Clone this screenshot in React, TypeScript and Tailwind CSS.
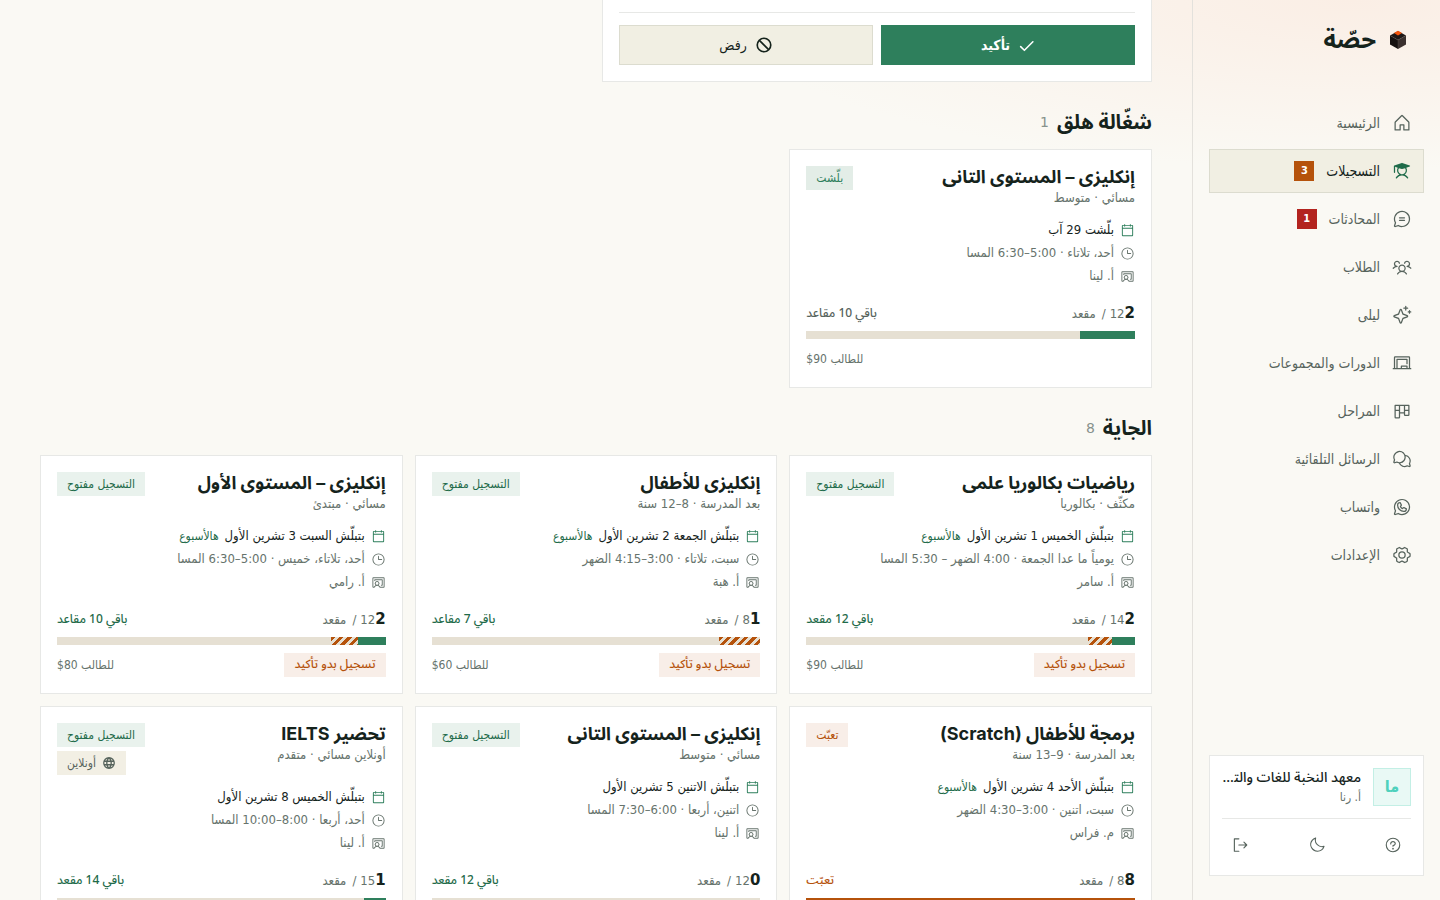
import type { ReactNode } from 'react'
import type { IconType } from 'react-icons'
import {
	PiCalendarBlank,
	PiChalkboard,
	PiChalkboardTeacher,
	PiChatCircleText,
	PiChatsCircle,
	PiCheckBold,
	PiClock,
	PiGearSix,
	PiGlobeBold,
	PiHouse,
	PiKanban,
	PiMoon,
	PiProhibitBold,
	PiQuestion,
	PiSignOut,
	PiSparkle,
	PiStudentFill,
	PiUsersThree,
	PiWhatsappLogo,
} from 'react-icons/pi'
import clsx from 'clsx'

interface NavItem {
	label: string
	icon: IconType
	active?: boolean
	count?: number
	countClass?: string
}

interface Course {
	title: string
	subtitle: string
	status: string
	tone: 'open' | 'running' | 'full'
	online?: boolean
	start: string
	thisWeek?: boolean
	schedule: string
	teacher: string
	taken: number
	pending: number
	seats: number
	left: string
	price: string
}

const NAV: NavItem[] = [
	{ label: 'الرئيسية', icon: PiHouse },
	{ label: 'التسجيلات', icon: PiStudentFill, active: true, count: 3, countClass: 'bg-[#b5520b]' },
	{ label: 'المحادثات', icon: PiChatCircleText, count: 1, countClass: 'bg-[#b3241f]' },
	{ label: 'الطلاب', icon: PiUsersThree },
	{ label: 'ليلى', icon: PiSparkle },
	{ label: 'الدورات والمجموعات', icon: PiChalkboard },
	{ label: 'المراحل', icon: PiKanban },
	{ label: 'الرسائل التلقائية', icon: PiChatsCircle },
	{ label: 'واتساب', icon: PiWhatsappLogo },
	{ label: 'الإعدادات', icon: PiGearSix },
]

const RUNNING: Course[] = [
	{
		title: 'إنكليزى – المستوى التانى',
		subtitle: 'مسائي · متوسط',
		status: 'بلّشت',
		tone: 'running',
		start: 'بلّشت 29 آب',
		schedule: 'أحد، تلاتاء · 5:00–6:30 المسا',
		teacher: 'أ. لينا',
		taken: 2,
		pending: 0,
		seats: 12,
		left: 'باقي 10 مقاعد',
		price: '$90',
	},
]

const UPCOMING: Course[] = [
	{
		title: 'رياضيات بكالوريا علمى',
		subtitle: 'مكثّف · بكالوريا',
		status: 'التسجيل مفتوح',
		tone: 'open',
		start: 'بتبلّش الخميس 1 تشرين الأول',
		thisWeek: true,
		schedule: 'يومياً ما عدا الجمعة · 4:00 الضهر – 5:30 المسا',
		teacher: 'أ. سامر',
		taken: 2,
		pending: 1,
		seats: 14,
		left: 'باقي 12 مقعد',
		price: '$90',
	},
	{
		title: 'إنكليزى للأطفال',
		subtitle: 'بعد المدرسة · 8–12 سنة',
		status: 'التسجيل مفتوح',
		tone: 'open',
		start: 'بتبلّش الجمعة 2 تشرين الأول',
		thisWeek: true,
		schedule: 'سبت، تلاتاء · 3:00–4:15 الضهر',
		teacher: 'أ. هبة',
		taken: 1,
		pending: 1,
		seats: 8,
		left: 'باقي 7 مقاعد',
		price: '$60',
	},
	{
		title: 'إنكليزى – المستوى الأول',
		subtitle: 'مسائي · مبتدئ',
		status: 'التسجيل مفتوح',
		tone: 'open',
		start: 'بتبلّش السبت 3 تشرين الأول',
		thisWeek: true,
		schedule: 'أحد، تلاتاء، خميس · 5:00–6:30 المسا',
		teacher: 'أ. رامي',
		taken: 2,
		pending: 1,
		seats: 12,
		left: 'باقي 10 مقاعد',
		price: '$80',
	},
	{
		title: 'برمجة للأطفال (Scratch)',
		subtitle: 'بعد المدرسة · 9–13 سنة',
		status: 'تعبّت',
		tone: 'full',
		start: 'بتبلّش الأحد 4 تشرين الأول',
		thisWeek: true,
		schedule: 'سبت، اتنين · 3:00–4:30 الضهر',
		teacher: 'م. فراس',
		taken: 8,
		pending: 0,
		seats: 8,
		left: 'تعبّت',
		price: '',
	},
	{
		title: 'إنكليزى – المستوى التانى',
		subtitle: 'مسائي · متوسط',
		status: 'التسجيل مفتوح',
		tone: 'open',
		start: 'بتبلّش الاتنين 5 تشرين الأول',
		schedule: 'اتنين، أربعا · 6:00–7:30 المسا',
		teacher: 'أ. لينا',
		taken: 0,
		pending: 0,
		seats: 12,
		left: 'باقي 12 مقعد',
		price: '',
	},
	{
		title: 'تحضير IELTS',
		subtitle: 'أونلاين مسائي · متقدم',
		status: 'التسجيل مفتوح',
		tone: 'open',
		online: true,
		start: 'بتبلّش الخميس 8 تشرين الأول',
		schedule: 'أحد، أربعا · 8:00–10:00 المسا',
		teacher: 'أ. لينا',
		taken: 1,
		pending: 0,
		seats: 15,
		left: 'باقي 14 مقعد',
		price: '',
	},
]

const BADGE_TONE = {
	open: 'bg-[#e9f2ed] text-[#1f6b4a]',
	running: 'bg-[#e3ede7] text-[#2e7f5c]',
	full: 'bg-[#f8eee8] text-[#b5520b]',
	neutral: 'bg-[#f2efe4] text-[#56635c]',
}

const LEFT_TONE = {
	open: 'text-[#1f6b4a]',
	running: 'text-[#56635c]',
	full: 'text-[#b5520b]',
}

function Badge({ tone, className, children }: { tone: keyof typeof BADGE_TONE; className?: string; children: ReactNode }) {
	return (
		<span className={clsx('flex h-6 items-center gap-1.5 px-2.5 text-xs font-medium whitespace-nowrap', BADGE_TONE[tone], className)}>
			{children}
		</span>
	)
}

function SeatBar({ course }: { course: Course }) {
	const confirmed = course.taken - course.pending
	return (
		<div className="mt-[5px] flex h-2 bg-[#e6e0d3]">
			<div
				className={course.tone === 'full' ? 'bg-[#b5520b]' : 'bg-[#2e7f5c]'}
				style={{ width: `${(confirmed / course.seats) * 100}%` }}
			/>
			<div
				className="bg-[repeating-linear-gradient(135deg,#b5520b_0px,#b5520b_3px,transparent_3px,transparent_6px)]"
				style={{ width: `${(course.pending / course.seats) * 100}%` }}
			/>
		</div>
	)
}

function CourseCard({ course }: { course: Course }) {
	return (
		<article className="flex flex-col border border-[#e7e8e6] bg-white p-4">
			<div className="flex items-start justify-between gap-3">
				<div className="min-w-0">
					<h3 className="font-['Inter','Noto_Sans_Arabic','DejaVu_Sans',sans-serif] text-lg leading-[22px] font-bold text-[#15231c]">
						{course.title}
					</h3>
					<p className="text-[13px] leading-5 text-[#66736c]">{course.subtitle}</p>
				</div>
				<div className="flex flex-col items-end gap-1">
					<Badge tone={course.tone}>{course.status}</Badge>
					{course.online && (
						<Badge tone="neutral">
							<PiGlobeBold size={14} />
							أونلاين
						</Badge>
					)}
				</div>
			</div>

			<ul className="mt-3 flex flex-col gap-[3px] text-[13px] leading-5 text-[#66736c]">
				<li className="flex items-center gap-1.5 text-[#15231c]">
					<PiCalendarBlank size={15} className="shrink-0 text-[#2e7f5c]" />
					<span>{course.start}</span>
					{course.thisWeek && <span className="text-xs font-medium text-[#1f6b4a]">هالأسبوع</span>}
				</li>
				<li className="flex items-center gap-1.5">
					<PiClock size={15} className="shrink-0" />
					<span>{course.schedule}</span>
				</li>
				<li className="flex items-center gap-1.5">
					<PiChalkboardTeacher size={15} className="shrink-0" />
					<span>{course.teacher}</span>
				</li>
			</ul>

			<div className="mt-auto pt-4">
				<div className="flex h-6 items-center justify-between text-xs">
					<div className="flex items-center text-[13px] text-[#66736c]">
						<b className="font-['DejaVu_Sans',sans-serif] text-[15px] text-[#15231c]">{course.taken}</b>
						<span>{course.seats}</span>
						<span className="ms-1">/</span>
						<span className="ms-1.5">مقعد</span>
					</div>
					<span
						className={clsx(
							"font-['Noto_Sans_Arabic','DejaVu_Sans_Condensed',sans-serif] font-medium",
							LEFT_TONE[course.tone],
						)}
					>
						{course.left}
					</span>
				</div>
				<SeatBar course={course} />
				<div className="mt-2 flex h-6 items-center justify-between">
					{course.pending > 0 && (
						<Badge tone="full" className="font-['Noto_Sans_Arabic','DejaVu_Sans_Condensed',sans-serif]">
							تسجيل بدو تأكيد
						</Badge>
					)}
					{course.price && (
						<span className="ms-auto text-xs text-[#66736c]">
							للطالب <bdi dir="ltr">{course.price}</bdi>
						</span>
					)}
				</div>
			</div>
		</article>
	)
}

function Section({ title, count, courses }: { title: string; count: number; courses: Course[] }) {
	return (
		<section className="pt-6">
			<div className="mb-[11px] flex h-8 items-center gap-2">
				<h2 className="font-['Inter','Noto_Sans_Arabic','DejaVu_Sans',sans-serif] text-xl font-bold text-[#15231c]">{title}</h2>
				<span className="font-['DejaVu_Sans',sans-serif] text-sm text-[#87928c]">{count}</span>
			</div>
			<div className="grid grid-cols-3 gap-3">
				{courses.map(course => (
					<CourseCard key={course.title} course={course} />
				))}
			</div>
		</section>
	)
}

function Logo() {
	return (
		<svg viewBox="0 0 20 20" className="size-5" aria-hidden="true">
			<path d="M10 1 18 5.5 10 10 2 5.5Z" fill="#1d1716" />
			<path d="M2 5.5 10 10V19L2 14.5Z" fill="#15100f" />
			<path d="M18 5.5 10 10V19L18 14.5Z" fill="#3a302e" />
			<path d="M10 .8 14 3 10 5.4 6 3Z" fill="#f4540c" />
			<path d="M2 5.5 10 10 18 5.5M10 10V19" fill="none" stroke="#5b504d" strokeWidth="0.4" />
		</svg>
	)
}

function Sidebar() {
	return (
		<aside className="flex w-62 shrink-0 flex-col border-e border-[#e3e1dc] px-4 pb-6">
			<div className="flex h-[101px] items-start px-4 pt-[22px]">
				<div className="flex h-9 items-center gap-3">
					<Logo />
					<span className="font-['Inter','Noto_Sans_Arabic','DejaVu_Sans',sans-serif] text-2xl font-bold text-[#15231c]">حصّة</span>
				</div>
			</div>

			<nav className="flex flex-col gap-1">
				{NAV.map(item => (
					<a
						key={item.label}
						href="#"
						className={clsx(
							'flex h-11 items-center gap-3 border px-[11px] text-sm',
							item.active ? 'border-[#dcdccf] bg-[#f1efe3] text-[#15231c]' : 'border-transparent text-[#56635c]',
						)}
					>
						<item.icon size={20} className={item.active ? 'text-[#1f6b4a]' : ''} />
						<span>{item.label}</span>
						{item.count && (
							<span className={clsx('flex size-5 items-center justify-center text-[11px] font-bold text-white', item.countClass)}>
								{item.count}
							</span>
						)}
					</a>
				))}
			</nav>

			<div className="mt-auto border border-[#e7e8e6] bg-white p-3">
				<div className="flex items-center gap-3">
					<div className="flex size-[38px] shrink-0 items-center justify-center border border-[#c3efe5] bg-[#e9f9f5] text-base font-bold text-[#4fd1bd]">
						ما
					</div>
					<div className="min-w-0">
						<p className="truncate font-['Noto_Sans_Arabic','DejaVu_Sans_Condensed',sans-serif] text-sm leading-5 font-medium text-[#15231c]">
							معهد النخبة للغات والتدريب
						</p>
						<p className="text-xs leading-[18px] text-[#66736c]">أ. رنا</p>
					</div>
				</div>
				<div className="mt-3 flex justify-between border-t border-[#e7e8e6] pt-2 text-[#56635c]">
					<button type="button" aria-label="مساعدة" className="flex size-9 items-center justify-center">
						<PiQuestion size={18} />
					</button>
					<button type="button" aria-label="الوضع الليلي" className="flex size-9 items-center justify-center">
						<PiMoon size={18} />
					</button>
					<button type="button" aria-label="تسجيل الخروج" className="flex size-9 items-center justify-center">
						<PiSignOut size={18} />
					</button>
				</div>
			</div>
		</aside>
	)
}

export default function App() {
	return (
		<div
			dir="rtl"
			className="flex h-screen overflow-hidden bg-[#faf9f4] bg-[radial-gradient(640px_170px_at_94%_0px,#faeee5,transparent)] font-['DejaVu_Sans_Condensed','DejaVu_Sans',sans-serif] text-[#15231c]"
		>
			<Sidebar />
			<main className="min-w-0 flex-1 overflow-hidden px-10">
				<div className="grid grid-cols-2 gap-3">
					<div className="border border-t-0 border-[#e7e8e6] bg-white px-4 pt-3 pb-4">
						<div className="grid grid-cols-2 gap-2 border-t border-[#e7e8e6] pt-3">
							<button type="button" className="flex h-10 items-center justify-center gap-2 bg-[#2e7f5c] text-sm font-bold text-white">
								<PiCheckBold size={17} />
								تأكيد
							</button>
							<button type="button" className="flex h-10 items-center justify-center gap-2 border border-[#dcdccf] bg-[#f1efe3] text-sm">
								<PiProhibitBold size={18} />
								رفض
							</button>
						</div>
					</div>
				</div>
				<Section title="شغّالة هلق" count={1} courses={RUNNING} />
				<Section title="الجاية" count={8} courses={UPCOMING} />
			</main>
		</div>
	)
}
